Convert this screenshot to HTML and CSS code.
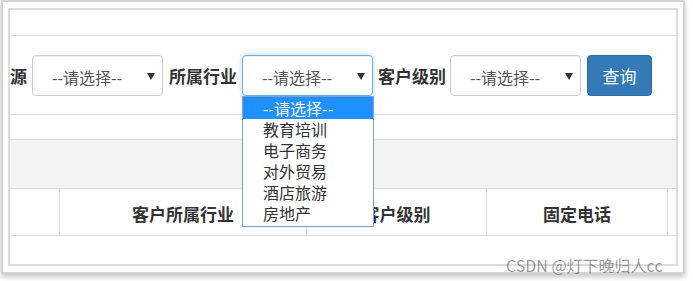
FILE: index.html
```html
<!DOCTYPE html>
<html lang="zh-CN">
<head>
<meta charset="utf-8">
<title>客户列表</title>
<link rel="stylesheet" href="styles.css">
</head>
<body>
<div class="shot">
  <div class="panel">
    <div class="panel-heading"></div>
    <div class="form-row">
      <span class="label">源</span>
      <div class="select gap-6"><span class="sel-text">--请选择--</span><span class="caret"></span></div>
      <span class="label">所属行业</span>
      <div class="select select-focus gap-5">
        <span class="sel-text">--请选择--</span><span class="caret"></span>
        <ul class="dropdown">
          <li class="opt opt-active">--请选择--</li>
          <li class="opt">教育培训</li>
          <li class="opt">电子商务</li>
          <li class="opt">对外贸易</li>
          <li class="opt">酒店旅游</li>
          <li class="opt">房地产</li>
        </ul>
      </div>
      <span class="label label-tight">客户级别</span>
      <div class="select gap-6"><span class="sel-text">--请选择--</span><span class="caret"></span></div>
      <button class="btn">查询</button>
    </div>
    <div class="blank"></div>
    <div class="band"></div>
    <div class="thead">
      <div class="th c1"></div>
      <div class="th c2">客户所属行业</div>
      <div class="th c3">客户级别</div>
      <div class="th c4">固定电话</div>
      <div class="th c5"></div>
    </div>
    <div class="rest"></div>
  </div>
  <div class="watermark">CSDN @灯下晚归人cc</div>
</div>
</body>
</html>
```
FILE: styles.css
```css
* { box-sizing: border-box; }
html, body { margin: 0; padding: 0; background: #fff; }
body {
  font-family: "Noto Sans CJK SC", "Noto Sans", "Liberation Sans", sans-serif;
  color: #333;
  width: 693px;
  height: 281px;
  overflow: hidden;
}
.shot {
  position: relative;
  margin-left: 1px;
  width: 684px;
  height: 274px;
  border: 2px solid #d2d2d2;
  padding: 6px 5px 6px 5px;
  box-shadow: 0 3px 5px rgba(0, 0, 0, 0.22);
  background: #fff;
}
.panel {
  width: 670px;
  height: 258px;
  border: 2px solid #dcdcdc;
  overflow: hidden;
  display: flex;
  flex-direction: column;
}
.panel-heading {
  height: 26px;
  flex: none;
  border-bottom: 1px solid #dedede;
}
.form-row {
  height: 79px;
  flex: none;
  border-bottom: 1px solid #dedede;
  display: flex;
  align-items: flex-start;
  padding-top: 19px;
}
.label {
  font-size: 17px;
  font-weight: bold;
  line-height: 41px;
  height: 41px;
  color: #333;
  margin-right: 5px;
}
.label-tight { margin-right: 4px; }
.select {
  position: relative;
  width: 131px;
  height: 41px;
  border: 1px solid #cccccc;
  border-radius: 4px;
  display: flex;
  align-items: center;
  padding-left: 19px;
  padding-right: 7px;
  background: #fff;
  box-shadow: inset 0 1px 1px rgba(0, 0, 0, 0.06);
}
.gap-6 { margin-right: 6px; }
.gap-5 { margin-right: 5px; }
.select-focus {
  border-color: #66afe9;
  box-shadow: inset 0 1px 1px rgba(0, 0, 0, 0.05), 0 0 4px rgba(102, 175, 233, 0.55);
}
.sel-text {
  flex: 1;
  font-size: 16px;
  color: #555;
  line-height: 20px;
  padding-top: 2px;
}
.caret {
  width: 0;
  height: 0;
  border-left: 4px solid transparent;
  border-right: 4px solid transparent;
  border-top: 7px solid #333;
  margin-top: 2px;
}
.btn {
  width: 65px;
  height: 41px;
  background: #337ab7;
  border: 1px solid #2e6da4;
  border-radius: 4px;
  color: #fff;
  font-family: inherit;
  font-size: 17px;
  line-height: 20px;
  padding: 0;
}
.dropdown {
  position: absolute;
  left: -1px;
  top: 40px;
  width: 132px;
  margin: 0;
  padding: 0 0 2px 0;
  list-style: none;
  background: #fff;
  border: 1px solid #7f9fd6;
  z-index: 5;
}
.opt {
  font-size: 16px;
  line-height: 21px;
  height: 21px;
  padding-left: 20px;
  color: #333;
  white-space: nowrap;
}
.opt-active {
  height: 22px;
  line-height: 22px;
  background: #1e90ff;
  color: #fff;
}
.blank {
  height: 25px;
  flex: none;
  border-bottom: 1px solid #dedede;
}
.band {
  height: 49px;
  flex: none;
  background: #f4f4f4;
  border-bottom: 1px solid #dedede;
}
.thead {
  height: 47px;
  flex: none;
  display: flex;
  border-bottom: 1px solid #dedede;
}
.th {
  border-right: 1px solid #dedede;
  font-size: 17px;
  font-weight: bold;
  color: #333;
  text-align: center;
  line-height: 20px;
  padding-top: 15px;
}
.c1 { width: 50px; }
.c2 { width: 247px; }
.c3 { width: 180px; }
.c4 { width: 181px; }
.c5 { flex: 1; border-right: none; }
.rest { flex: 1; }
.watermark {
  position: absolute;
  left: 503px;
  top: 253px;
  font-size: 16px;
  line-height: 20px;
  color: rgba(110, 110, 110, 0.7);
  white-space: nowrap;
  font-family: "Noto Sans CJK SC", "Liberation Sans", sans-serif;
}
```
